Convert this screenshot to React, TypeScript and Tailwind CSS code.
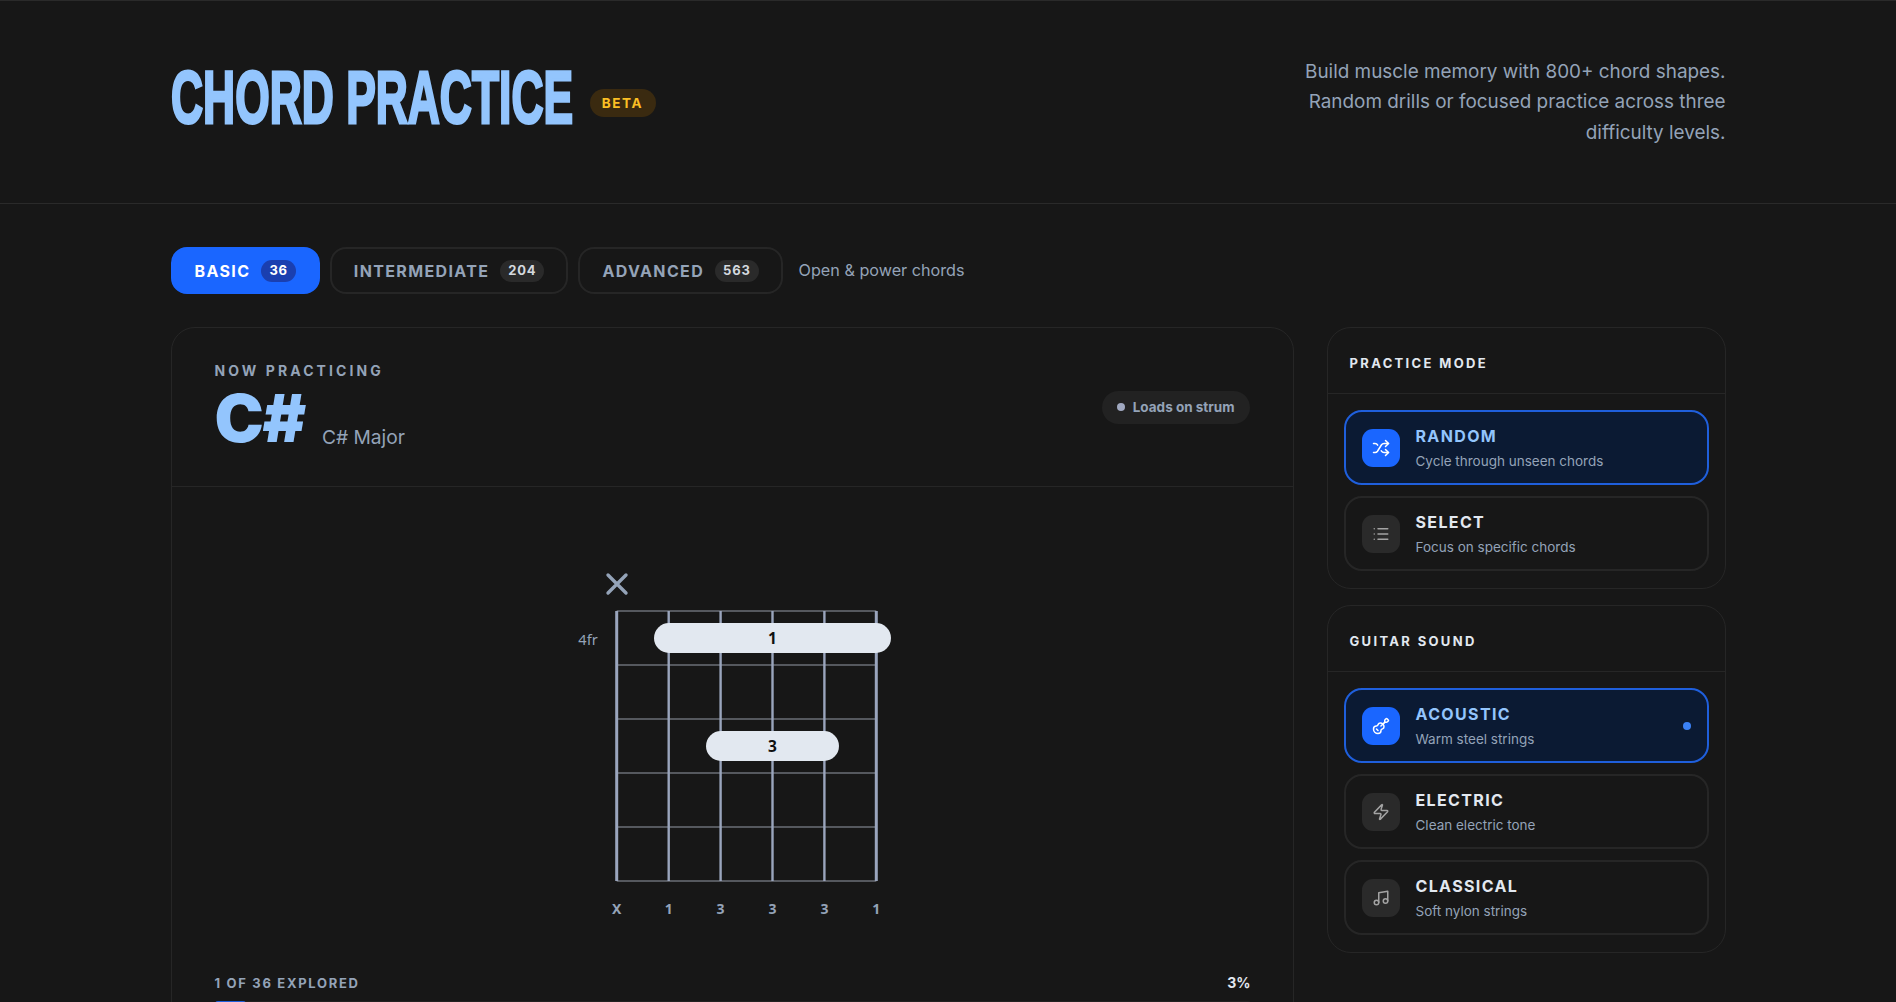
import { Guitar, List, Music, Shuffle, Zap } from 'lucide-react'
import type { ReactNode } from 'react'

const STRINGS = [616.7, 668.7, 720.6, 772.5, 824.4, 876.3]
const FRETS = [611, 665, 719, 773, 827, 881]
const OPEN_LABELS = ['X', '1', '3', '3', '3', '1']

// svg is placed with its left edge at x=532 and top at y=550 of the page
const X_OFFSET = 532
const Y_OFFSET = 550

function ChordDiagram() {
  return (
    <svg viewBox="0 0 400 380" className="mx-auto block h-[380px] w-[400px]" fontFamily="'Noto Sans', sans-serif">
      {FRETS.map((y) => (
        <line
          key={y}
          x1={STRINGS[0] - X_OFFSET}
          x2={STRINGS[5] - X_OFFSET}
          y1={y - Y_OFFSET}
          y2={y - Y_OFFSET}
          stroke="#55585e"
          strokeWidth="1.8"
        />
      ))}
      {STRINGS.map((x, i) => (
        <line
          key={x}
          x1={x - X_OFFSET}
          x2={x - X_OFFSET}
          y1={FRETS[0] - Y_OFFSET}
          y2={FRETS[5] - Y_OFFSET}
          stroke="#9aa5bd"
          strokeWidth={i === 0 || i === 5 ? 3 : 2.4}
        />
      ))}
      <path d="M76 25 L94 43 M94 25 L76 43" stroke="#94a3b8" strokeWidth="3.4" strokeLinecap="round" />
      <text x="56" y="95" textAnchor="middle" fontSize="14.5" fill="#94a3b8">4fr</text>
      <rect x="122" y="73" width="237" height="30" rx="15" fill="#e2e8f0" />
      <text x="240.5" y="93.5" textAnchor="middle" fontSize="15.5" fontWeight="700" fill="#111">1</text>
      <rect x="174" y="181" width="133" height="30" rx="15" fill="#e2e8f0" />
      <text x="240.5" y="201.5" textAnchor="middle" fontSize="15.5" fontWeight="700" fill="#111">3</text>
      {OPEN_LABELS.map((label, i) => (
        <text
          key={i}
          x={STRINGS[i] - X_OFFSET}
          y="364"
          textAnchor="middle"
          fontSize="14"
          fontWeight="700"
          fill="#94a3b8"
        >
          {label}
        </text>
      ))}
    </svg>
  )
}

function Tab({ label, count, active }: { label: string; count: number; active?: boolean }) {
  return (
    <button
      type="button"
      className={`flex h-[47px] items-center gap-[11px] rounded-2xl border-2 px-[22px] text-base font-bold tracking-[0.085em] ${
        active ? 'border-[#1a66ff] bg-[#1a66ff] text-white' : 'border-[#262626] text-[#94a3b8]'
      }`}
    >
      {label}
      <span
        className={`flex h-[22px] items-center rounded-full px-[8px] text-[13px] tracking-[0.06em] ${
          active ? 'bg-[#1a3fb0] text-white' : 'bg-[#2a2a2a] text-[#d4d8de]'
        }`}
      >
        {count}
      </span>
    </button>
  )
}

function OptionRow({
  icon,
  title,
  desc,
  active,
  dot,
}: {
  icon: ReactNode
  title: string
  desc: string
  active?: boolean
  dot?: boolean
}) {
  return (
    <div
      className={`flex h-[75px] items-center gap-4 rounded-[18px] border-2 pl-4 pr-4 ${
        active ? 'border-[#1f5fdc] bg-[#0b1a33]' : 'border-[#262626]'
      }`}
    >
      <div
        className={`flex h-[38px] w-[38px] shrink-0 items-center justify-center rounded-[11px] ${
          active ? 'bg-[#1a66ff] text-white' : 'bg-[#2a2a2a] text-[#a3a3a3]'
        }`}
      >
        {icon}
      </div>
      <div className="min-w-0 flex-1">
        <div className={`text-base leading-[22px] font-bold tracking-[0.085em] ${active ? 'text-[#93c5fd]' : 'text-[#e2e8f0]'}`}>
          {title}
        </div>
        <div className="mt-[4px] text-[13.5px] leading-[20px] text-[#94a3b8]">{desc}</div>
      </div>
      {dot && <span className="h-2 w-2 rounded-full bg-[#3b82f6]" />}
    </div>
  )
}

function Panel({ title, children }: { title: string; children: ReactNode }) {
  return (
    <section className="rounded-3xl border border-[#262626]">
      <h2 className="flex h-[66px] items-center border-b border-[#262626] px-[22px] pt-[6px] text-[13px] font-bold tracking-[0.18em] text-[#e2e8f0]">
        {title}
      </h2>
      <div className="flex flex-col gap-[11px] px-4 pt-4 pb-[17px]">{children}</div>
    </section>
  )
}

export default function App() {
  return (
    <div className="h-screen overflow-hidden bg-[#171717] font-[Inter,sans-serif]">
      <header className="border-y border-[#2a2a2a]">
        <div className="mx-auto flex h-[202px] w-[1555px] items-center justify-between">
          <div className="flex items-center gap-[18px]">
            <h1 className="mb-[8px] w-[401px] origin-left scale-x-[0.6] font-['Liberation_Sans',sans-serif] text-[74px] leading-none font-bold whitespace-nowrap text-[#93c5fd] [-webkit-text-stroke:3px_#93c5fd]">
              CHORD PRACTICE
            </h1>
            <span className="mt-[2px] flex h-[28px] w-[66px] items-center justify-center rounded-full bg-[#3a2a10] text-[13.5px] font-bold tracking-[0.12em] text-[#fbbf24]">
              BETA
            </span>
          </div>
          <p className="mt-[1px] w-[440px] text-right text-[18.9px] leading-[30.6px] text-[#94a3b8]">
            Build muscle memory with 800+ chord shapes. Random drills or focused practice across three difficulty levels.
          </p>
        </div>
      </header>

      <main className="mx-auto w-[1555px] pt-[43px]">
        <div className="flex items-center gap-[10px]">
          <Tab label="BASIC" count={36} active />
          <Tab label="INTERMEDIATE" count={204} />
          <Tab label="ADVANCED" count={563} />
          <span className="ml-[6px] text-[16.2px] text-[#94a3b8]">Open &amp; power chords</span>
        </div>

        <div className="mt-[33px] grid grid-cols-[1123px_399px] gap-[33px]">
          <section className="rounded-3xl border border-[#262626] pb-10">
            <div className="flex h-[159px] items-center justify-between border-b border-[#262626] px-[43px]">
              <div>
                <div className="text-[14px] leading-5 font-bold tracking-[0.22em] text-[#94a3b8]">NOW PRACTICING</div>
                <div className="mt-[2px] flex items-baseline gap-[17px]">
                  <span className="text-[66px] leading-[70px] font-black tracking-[-0.02em] text-[#93c5fd]">C#</span>
                  <span className="translate-y-[2px] text-[19.2px] text-[#94a3b8]">C# Major</span>
                </div>
              </div>
              <div className="flex h-[33px] items-center gap-2 rounded-full bg-[#222222] px-[15px] text-[13.5px] font-bold text-[#94a3b8]">
                <span className="h-2 w-2 rounded-full bg-[#a0a8c0]" />
                Loads on strum
              </div>
            </div>
            <div className="pt-[63px]">
              <ChordDiagram />
              <div className="mt-[43px] pr-[42px] pl-[43px]">
                <div className="flex items-center justify-between text-[13px] leading-5 font-bold">
                  <span className="tracking-[0.13em] text-[#94a3b8]">1 OF 36 EXPLORED</span>
                  <span className="text-[14px] text-[#e2e8f0]">3%</span>
                </div>
                <div className="mt-2 h-[6px] rounded-full bg-[#222222]">
                  <div className="h-full w-[3%] rounded-full bg-[#1f5fdc]" />
                </div>
              </div>
            </div>
          </section>

          <aside className="flex flex-col gap-4 self-start">
            <Panel title="PRACTICE MODE">
              <OptionRow icon={<Shuffle size={18} />} title="RANDOM" desc="Cycle through unseen chords" active />
              <OptionRow icon={<List size={18} />} title="SELECT" desc="Focus on specific chords" />
            </Panel>
            <Panel title="GUITAR SOUND">
              <OptionRow icon={<Guitar size={18} />} title="ACOUSTIC" desc="Warm steel strings" active dot />
              <OptionRow icon={<Zap size={18} />} title="ELECTRIC" desc="Clean electric tone" />
              <OptionRow icon={<Music size={18} />} title="CLASSICAL" desc="Soft nylon strings" />
            </Panel>
          </aside>
        </div>
      </main>
    </div>
  )
}
